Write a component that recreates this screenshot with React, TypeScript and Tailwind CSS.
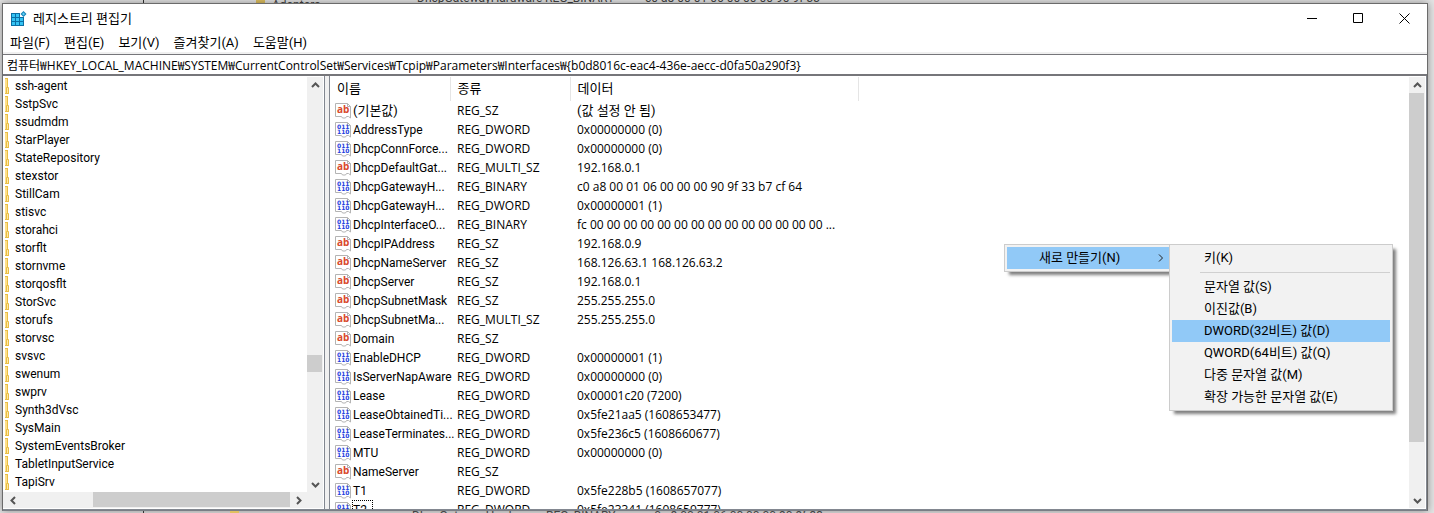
import type { ReactNode } from 'react';

type ValueKind = 'text' | 'binary';

type RegValue = {
  name: string;
  kind: ValueKind;
  type: string;
  data: string;
  korean?: boolean;
  focused?: boolean;
};

const KOREAN = "font-['Roboto','Noto_Sans_CJK_KR',sans-serif] text-[13px]";

const MENUS = ['파일(F)', '편집(E)', '보기(V)', '즐겨찾기(A)', '도움말(H)'];

const PATH =
  '컴퓨터₩HKEY_LOCAL_MACHINE₩SYSTEM₩CurrentControlSet₩Services₩Tcpip₩Parameters₩Interfaces₩{b0d8016c-eac4-436e-aecc-d0fa50a290f3}';

const KEYS = [
  'ssh-agent',
  'SstpSvc',
  'ssudmdm',
  'StarPlayer',
  'StateRepository',
  'stexstor',
  'StillCam',
  'stisvc',
  'storahci',
  'storflt',
  'stornvme',
  'storqosflt',
  'StorSvc',
  'storufs',
  'storvsc',
  'svsvc',
  'swenum',
  'swprv',
  'Synth3dVsc',
  'SysMain',
  'SystemEventsBroker',
  'TabletInputService',
  'TapiSrv',
];

const VALUES: RegValue[] = [
  { name: '(기본값)', kind: 'text', type: 'REG_SZ', data: '(값 설정 안 됨)', korean: true },
  { name: 'AddressType', kind: 'binary', type: 'REG_DWORD', data: '0x00000000 (0)' },
  { name: 'DhcpConnForce...', kind: 'binary', type: 'REG_DWORD', data: '0x00000000 (0)' },
  { name: 'DhcpDefaultGat...', kind: 'text', type: 'REG_MULTI_SZ', data: '192.168.0.1' },
  { name: 'DhcpGatewayH...', kind: 'binary', type: 'REG_BINARY', data: 'c0 a8 00 01 06 00 00 00 90 9f 33 b7 cf 64' },
  { name: 'DhcpGatewayH...', kind: 'binary', type: 'REG_DWORD', data: '0x00000001 (1)' },
  { name: 'DhcpInterfaceO...', kind: 'binary', type: 'REG_BINARY', data: 'fc 00 00 00 00 00 00 00 00 00 00 00 00 00 00 ...' },
  { name: 'DhcpIPAddress', kind: 'text', type: 'REG_SZ', data: '192.168.0.9' },
  { name: 'DhcpNameServer', kind: 'text', type: 'REG_SZ', data: '168.126.63.1 168.126.63.2' },
  { name: 'DhcpServer', kind: 'text', type: 'REG_SZ', data: '192.168.0.1' },
  { name: 'DhcpSubnetMask', kind: 'text', type: 'REG_SZ', data: '255.255.255.0' },
  { name: 'DhcpSubnetMa...', kind: 'text', type: 'REG_MULTI_SZ', data: '255.255.255.0' },
  { name: 'Domain', kind: 'text', type: 'REG_SZ', data: '' },
  { name: 'EnableDHCP', kind: 'binary', type: 'REG_DWORD', data: '0x00000001 (1)' },
  { name: 'IsServerNapAware', kind: 'binary', type: 'REG_DWORD', data: '0x00000000 (0)' },
  { name: 'Lease', kind: 'binary', type: 'REG_DWORD', data: '0x00001c20 (7200)' },
  { name: 'LeaseObtainedTi...', kind: 'binary', type: 'REG_DWORD', data: '0x5fe21aa5 (1608653477)' },
  { name: 'LeaseTerminates...', kind: 'binary', type: 'REG_DWORD', data: '0x5fe236c5 (1608660677)' },
  { name: 'MTU', kind: 'binary', type: 'REG_DWORD', data: '0x00000000 (0)' },
  { name: 'NameServer', kind: 'text', type: 'REG_SZ', data: '' },
  { name: 'T1', kind: 'binary', type: 'REG_DWORD', data: '0x5fe228b5 (1608657077)' },
  { name: 'T2', kind: 'binary', type: 'REG_DWORD', data: '0x5fe23341 (1608659777)', focused: true },
];

const NEW_ITEMS = [
  '문자열 값(S)',
  '이진값(B)',
  'DWORD(32비트) 값(D)',
  'QWORD(64비트) 값(Q)',
  '다중 문자열 값(M)',
  '확장 가능한 문자열 값(E)',
];

function RegeditIcon() {
  return (
    <svg width="16" height="16" viewBox="0 0 16 16" aria-hidden="true">
      <path d="M0 2h9v4h4v9H0z" fill="#0b6fa4" />
      <g fill="#35c3f3">
        <path d="M1 3h3v3H1zM5 3h3v3H5zM1 7h3v3H1zM5 7h3v3H5zM9 7h3v3H9z" />
        <path d="M1 11h3v3H1zM5 11h3v3H5zM9 11h3v3H9z" />
      </g>
      <path d="M12.500 0l3 3-3 3-3-3z" fill="#1583b8" />
      <path d="M12.500 1.500L14 3l-1.500 1.500L11 3z" fill="#5fcdf5" />
    </svg>
  );
}

function ValueIcon({ kind }: { kind: ValueKind }) {
  return (
    <svg className="shrink-0" width="16" height="16" viewBox="0 0 16 16" aria-hidden="true">
      <path
        d="M.5.5h12l3 3v11.500l-2-1.500h-2l-1 1.500h-3l-1-1.500h-6z"
        fill="#fff"
        stroke="#b4b4b4"
      />
      <path d="M12.500.5v3h3" fill="none" stroke="#b4b4b4" />
      {kind === 'text' ? (
        <text x="2" y="10" fontSize="10" fontWeight="700" fontFamily="Open Sans" fill="#d9492b">
          ab
        </text>
      ) : (
        <g fontSize="6" fontWeight="700" fontFamily="DejaVu Sans" fill="#1f3fe0">
          <text x="2" y="7">011</text>
          <text x="2" y="12">110</text>
        </g>
      )}
    </svg>
  );
}

function FolderEdge() {
  return (
    <svg className="shrink-0" width="5" height="16" viewBox="0 0 5 16" aria-hidden="true">
      <path d="M0 1h3v14H0z" fill="#ffe08a" />
      <path d="M2.500 1v9M0 .5h3M0 15.500h4" stroke="#e8bd45" fill="none" />
      <path d="M1.500 9.500h2v6h-2z" fill="#ffe9a6" stroke="#e8bd45" />
    </svg>
  );
}

const CHEVRONS = {
  up: 'M1 6l3.500-3.500L8 6',
  down: 'M1 3l3.500 3.500L8 3',
  left: 'M6 1L2.500 4.500 6 8',
  right: 'M3 1l3.500 3.500L3 8',
};

function ScrollButton({ dir, label }: { dir: keyof typeof CHEVRONS; label: string }) {
  return (
    <button type="button" aria-label={label} className="flex size-[16px] shrink-0 items-center justify-center">
      <svg width="9" height="9" viewBox="0 0 9 9" aria-hidden="true">
        <path d={CHEVRONS[dir]} fill="none" stroke="#555" strokeWidth="2" />
      </svg>
    </button>
  );
}

function CaptionButton({ label, children }: { label: string; children: ReactNode }) {
  return (
    <button type="button" aria-label={label} className="flex h-[29px] w-[46px] items-center justify-center">
      <svg width="11" height="11" viewBox="0 0 11 11" fill="none" stroke="#000" aria-hidden="true">
        {children}
      </svg>
    </button>
  );
}

function MenuItem({ active, children }: { active?: boolean; children: ReactNode }) {
  return (
    <button
      type="button"
      role="menuitem"
      className={`flex h-[22px] w-full items-center pl-8 text-left ${active ? 'bg-[#91c9f7]' : ''}`}
    >
      {children}
    </button>
  );
}

function TreePane() {
  return (
    <section className="flex w-[322px] shrink-0 flex-col border-r border-[#828790] bg-white pt-px">
      <div className="flex min-h-0 flex-1">
        <ul className="min-w-0 flex-1 overflow-hidden pl-[2px] font-['Roboto',sans-serif]">
          {KEYS.map((key) => (
            <li key={key} className="flex h-[18px] items-center gap-[5px]">
              <FolderEdge />
              {key}
            </li>
          ))}
        </ul>
        <div className="mr-px flex w-[16px] flex-col bg-[#f0f0f0]">
          <ScrollButton dir="up" label="위로 스크롤" />
          <div className="flex-[262]" />
          <div className="mr-px h-[17px] bg-[#cdcdcd]" />
          <div className="flex-[104]" />
          <ScrollButton dir="down" label="아래로 스크롤" />
        </div>
      </div>
      <div className="mr-px mb-px flex h-[16px] bg-[#f0f0f0] pr-[17px] pl-[2px]">
        <ScrollButton dir="left" label="왼쪽으로 스크롤" />
        <div className="w-[72px]" />
        <div className="h-[15px] flex-1 bg-[#cdcdcd]" />
        <ScrollButton dir="right" label="오른쪽으로 스크롤" />
      </div>
    </section>
  );
}

function ValuePane() {
  return (
    <section className="flex min-w-0 flex-1 border-r border-l border-[#828790] bg-white pt-px">
      <div className="min-w-0 flex-1 overflow-hidden">
        <table className="w-[529px] table-fixed border-collapse text-left whitespace-nowrap">
          <thead className={KOREAN}>
            <tr className="h-6">
              <th className="w-[120px] border-r border-[#e5e5e5] pl-[7px] font-normal">이름</th>
              <th className="w-[120px] border-r border-[#e5e5e5] pl-[7px] font-normal">종류</th>
              <th className="border-r border-[#e5e5e5] pl-[7px] font-normal">데이터</th>
            </tr>
          </thead>
          <tbody>
            {VALUES.map((v, i) => (
              <tr key={i} className="h-[19px]">
                <td className={`p-0 pl-[5px] ${v.korean ? KOREAN : "font-['Roboto',sans-serif]"}`}>
                  <div className="flex h-[19px] items-center">
                    <ValueIcon kind={v.kind} />
                    <span
                      className={
                        v.focused
                          ? 'ml-px h-[19px] border border-dotted border-black pr-[5px]'
                          : 'pl-[2px]'
                      }
                    >
                      {v.name}
                    </span>
                  </div>
                </td>
                <td className="p-0 pl-[7px]">{v.type}</td>
                <td className={`p-0 pl-[7px] ${v.korean ? KOREAN : ''}`}>{v.data}</td>
              </tr>
            ))}
          </tbody>
        </table>
      </div>
      <div className="mr-px mb-px flex w-[16px] flex-col bg-[#f0f0f0]">
        <ScrollButton dir="up" label="위로 스크롤" />
        <div className="mr-px flex-[348] bg-[#cdcdcd]" />
        <div className="flex-[50]" />
        <ScrollButton dir="down" label="아래로 스크롤" />
      </div>
    </section>
  );
}

function ContextMenu() {
  return (
    <div className={`absolute top-[244px] right-[41px] flex items-start ${KOREAN}`}>
      <div role="menu" className="w-[165px] border border-r-0 border-[#ccc] bg-[#f2f2f2] py-[2px] pl-[2px] shadow-[4px_4px_3px_-1px_rgba(0,0,0,0.5)]">
        <MenuItem active>
          <span className="flex-1">새로 만들기(N)</span>
          <svg className="mr-[4px]" width="8" height="8" viewBox="0 0 8 8" aria-hidden="true">
            <path d="M2 .5L5.500 4 2 7.500" fill="none" stroke="#222" />
          </svg>
        </MenuItem>
      </div>
      <div role="menu" className="relative w-[224px] border border-[#ccc] bg-[#f2f2f2] p-[2px] shadow-[4px_4px_3px_-1px_rgba(0,0,0,0.5)]">
        <MenuItem>키(K)</MenuItem>
        <div className="mt-[3px] mb-[3px] ml-7 h-px bg-[#d0d0d0]" />
        {NEW_ITEMS.map((item) => (
          <MenuItem key={item} active={item.startsWith('DWORD')}>
            {item}
          </MenuItem>
        ))}
      </div>
    </div>
  );
}

export default function App() {
  return (
    <main className="relative flex h-screen flex-col overflow-hidden bg-[#e4e4e4] pr-[6px] pl-[2px] font-['Open_Sans','Noto_Sans_CJK_KR',sans-serif] text-[12px] leading-[18px] text-black">
      {/* sliver of the window underneath */}
      <div className="flex h-[3px] shrink-0 overflow-hidden font-['Roboto',sans-serif] leading-[10px] whitespace-nowrap text-[#444]">
        <span className="ml-[141px] w-px bg-[#333]" />
        <span className="ml-[112px] w-[9px] bg-[#e0c060]" />
        <span className="ml-[7px] w-[145px]">Adapters</span>
        <span className="w-[128px] self-end">DhcpGatewayHardware</span>
        <span className="w-[100px] self-end">REG_BINARY</span>
        <span className="self-end">c0 a8 00 01 06 00 00 00 90 9f 33</span>
      </div>

      <div className="flex min-h-0 flex-1 flex-col border border-[#6b6b6b] border-b-[#7a7e85] bg-white shadow-[0_0_8px_rgba(0,0,0,0.4)]">
        <header className="flex items-start">
          <div className="flex h-[30px] flex-1 items-center gap-[6px] pl-[8px]">
            <RegeditIcon />
            <h1 className={KOREAN}>레지스트리 편집기</h1>
          </div>
          <CaptionButton label="최소화">
            <path d="M0 5.500h10" />
          </CaptionButton>
          <CaptionButton label="최대화">
            <path d="M.5.5h9v9h-9z" />
          </CaptionButton>
          <CaptionButton label="닫기">
            <path d="M.5.5l10 10M10.500.5l-10 10" />
          </CaptionButton>
        </header>

        <nav className={`flex h-[20px] items-center gap-[14px] border-b-2 border-[#f0f0f0] pl-[7px] ${KOREAN}`}>
          {MENUS.map((menu) => (
            <button key={menu} type="button">
              {menu}
            </button>
          ))}
        </nav>

        <input
          type="text"
          aria-label="주소"
          defaultValue={PATH}
          className="h-[22px] w-full shrink-0 border-t border-b-2 border-[#76767a] bg-white pl-[4px] outline-none"
        />

        <div className="flex min-h-0 flex-1 gap-[4px] border-b border-[#828790] bg-[#f0f0f0]">
          <TreePane />
          <ValuePane />
        </div>
      </div>

      <div className="flex h-[2px] shrink-0 overflow-hidden font-['Roboto',sans-serif] leading-[10px] whitespace-nowrap text-[#444]">
        <span className="ml-[141px] w-px bg-[#333]" />
        <span className="ml-[86px] w-[9px] bg-[#e0c060]" />
        <span className="ml-[173px] w-[134px]">DhcpGatewayHardware</span>
        <span className="w-[102px]">REG_BINARY</span>
        <span>c0 a8 00 01 06 00 00 00 90 9f 33</span>
      </div>

      <ContextMenu />
    </main>
  );
}
